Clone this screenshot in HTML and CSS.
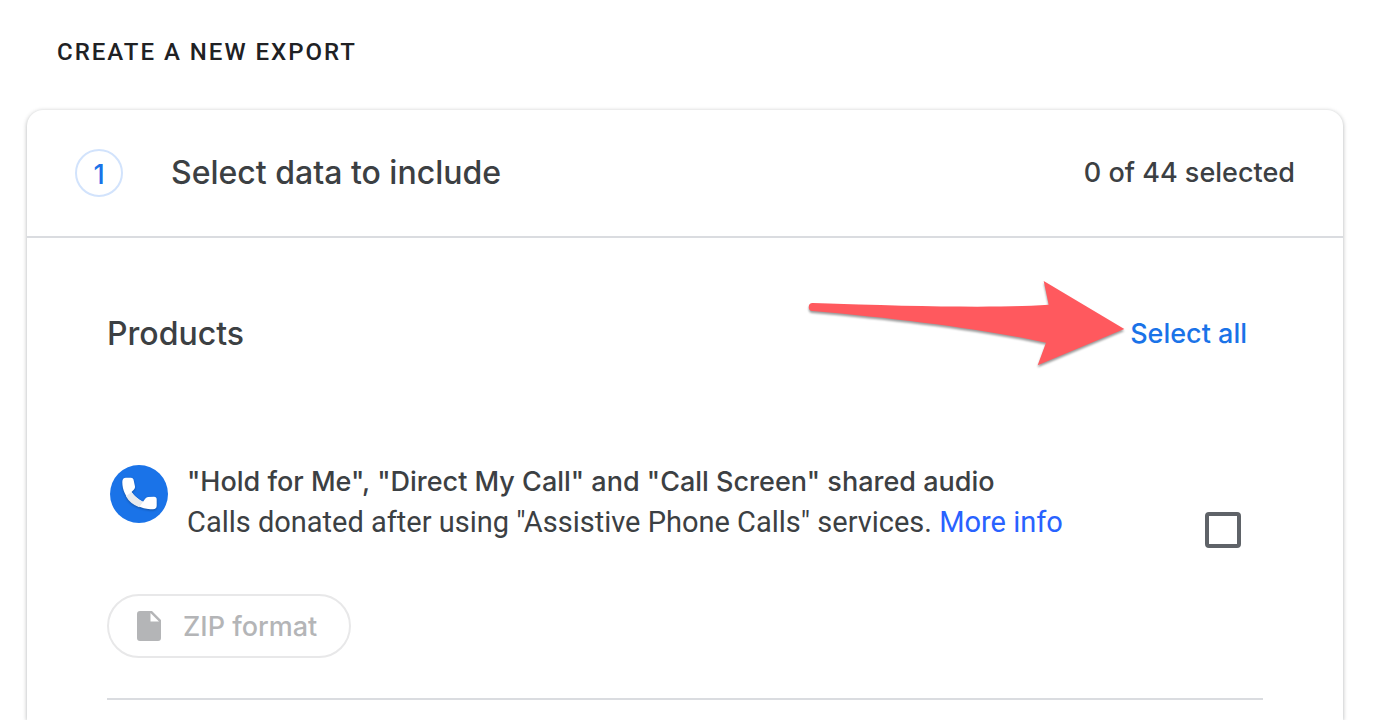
FILE: index.html
```html
<!DOCTYPE html>
<html lang="en">
<head>
    <meta charset="UTF-8">
    <meta name="viewport" content="width=device-width, initial-scale=1.0">
    <title>Create a new export</title>
    <link rel="stylesheet" href="styles.css">
</head>

<body>

    <h1 class="page-title">CREATE A NEW EXPORT</h1>

    <main class="card">
        <!-- Step header -->
        <header class="step-header">
            <span class="step-number">1</span>
            <h2 class="step-title">Select data to include</h2>
            <span class="step-count">0 of 44 selected</span>
        </header>

        <!-- Products list -->
        <section class="products">
            <div class="products-header">
                <h3 class="products-title">Products</h3>
                <div class="select-all-wrap">
                    <svg class="arrow" viewBox="0 0 328 116" aria-hidden="true">
                        <path fill="#ff595e" d="M11 27C113 30.5 197 32.3 246.7 28.7L241.7 5L322.3 53L235.7 89.3L244 66.7C180 53 97 42.5 10.5 35A4 4 0 0 1 11 27Z"/>
                    </svg>
                    <button type="button" class="select-all">Select all</button>
                </div>
            </div>

            <article class="product">
                <div class="product-row">
                    <svg class="product-icon" viewBox="0 0 60 60" aria-hidden="true">
                        <circle cx="30" cy="30" r="29" fill="#1a73e8"/>
                        <g class="handset">
                            <path fill="#ffffff" d="M13.3 18Q13.3 13.7 17 13.7H22Q24 13.7 24.5 15.5L26 22.5Q26.3 24.3 25 25.4L22.5 28Q26.5 34 34 37.8L36 35Q36.8 33.3 39 33L45 32.7Q47.7 32.7 47.7 35.5V41.5Q47.7 45.3 44 45.3C27 45.3 13.3 34 13.3 18Z"/>
                            <path fill="#e8eaed" d="M22.5 28Q26.5 34 34 37.8L30.2 43.2Q20.8 39.5 17 32.2Z"/>
                        </g>
                    </svg>
                    <div class="product-text">
                        <label class="product-name" for="call-audio">"Hold for Me", "Direct My Call" and "Call Screen" shared audio</label>
                        <p class="product-desc">Calls donated after using "Assistive Phone Calls" services. <a href="#">More info</a></p>
                    </div>
                    <input type="checkbox" class="product-check" id="call-audio">
                </div>
                <button type="button" class="format" disabled>
                    <svg class="format-icon" viewBox="0 0 24 30" aria-hidden="true">
                        <path fill="#b4b5b7" fill-rule="evenodd" d="M3 0H15L24 9V27Q24 30 21 30H3Q0 30 0 27V3Q0 0 3 0ZM13.5 2V10.5H22Z"/>
                    </svg>
                    ZIP format
                </button>
            </article>
        </section>
    </main>

</body>

</html>
```

FILE: styles.css
```css
* {
    box-sizing: border-box;
}

body {
    display: flex;
    flex-direction: column;
    min-height: 100vh;
    font-family: Roboto, Arial, sans-serif;
    background-color: #ffffff;
    color: #3c4043;
    margin: 0;
    padding: 32px 33px 0 27px;
}

h1,
h2,
h3,
p {
    margin: 0;
}

button {
    font-family: inherit;
    background: none;
    border: none;
    padding: 0;
    cursor: pointer;
}

.page-title {
    padding-left: 30px;
    margin-bottom: 38px;
    font-size: 24px;
    font-weight: 500;
    line-height: 40px;
    letter-spacing: 2px;
    color: #202124;
}

.card {
    flex: 1;
    border-radius: 16px 16px 0 0;
    box-shadow: 0 1px 4px rgba(60, 64, 67, 0.4);
    font-family: Inter, Roboto, sans-serif;
    font-size: 27px;
    font-weight: 500;
}

.step-header {
    display: flex;
    align-items: center;
    padding: 39px 48px;
    border-bottom: 2px solid #dadce0;
    line-height: 48px;
}

.step-number {
    width: 48px;
    height: 48px;
    margin-right: 48px;
    border: 2px solid #d2e3fc;
    border-radius: 50%;
    text-align: center;
    color: #1a73e8;
}

.step-title,
.products-title {
    font-size: 32px;
    font-weight: 500;
}

.step-count {
    margin-left: auto;
}

.products {
    padding: 72px 80px 0;
}

.products-header {
    display: flex;
    align-items: center;
    justify-content: space-between;
    padding-right: 16px;
    line-height: 48px;
}

.select-all-wrap {
    position: relative;
    display: flex;
    align-items: center;
}

.select-all {
    font-size: 27px;
    font-weight: 500;
    line-height: 48px;
    color: #1a73e8;
}

/* Callout arrow pointing at the button */
.arrow {
    position: absolute;
    right: 100%;
    width: 328px;
    height: 116px;
    pointer-events: none;
    filter: drop-shadow(0 2px 1px rgba(0, 0, 0, 0.4));
}

.product {
    margin-top: 104px;
    padding-bottom: 40px;
    border-bottom: 2px solid #dadce0;
}

.product-row {
    display: flex;
    align-items: flex-start;
    margin-bottom: 46px;
}

.product-icon {
    flex: none;
    width: 60px;
    height: 60px;
    margin: 2px 18px 0 2px;
}

.handset {
    filter: drop-shadow(0 1px 1px rgba(0, 0, 0, 0.3));
}

.product-text {
    flex: 1;
    line-height: 40px;
}

.product-name {
    display: block;
}

.product-desc {
    font-family: Roboto, Arial, sans-serif;
    font-size: 29px;
    font-weight: 400;
}

.product-desc a {
    color: #2962ff;
    text-decoration: none;
}

.product-check {
    appearance: none;
    flex: none;
    width: 36px;
    height: 36px;
    margin: 50px 22px 0 0;
    border: 4px solid #5f6368;
    border-radius: 4px;
}

.product-check:checked {
    background-color: #1a73e8;
}

.format {
    display: flex;
    align-items: center;
    gap: 22px;
    height: 64px;
    padding: 0 32px 0 28px;
    border: 2px solid #e8e8e9;
    border-radius: 32px;
    font-size: 27px;
    font-weight: 500;
    color: #b4b5b7;
}

.format-icon {
    width: 24px;
    height: 30px;
}
```
